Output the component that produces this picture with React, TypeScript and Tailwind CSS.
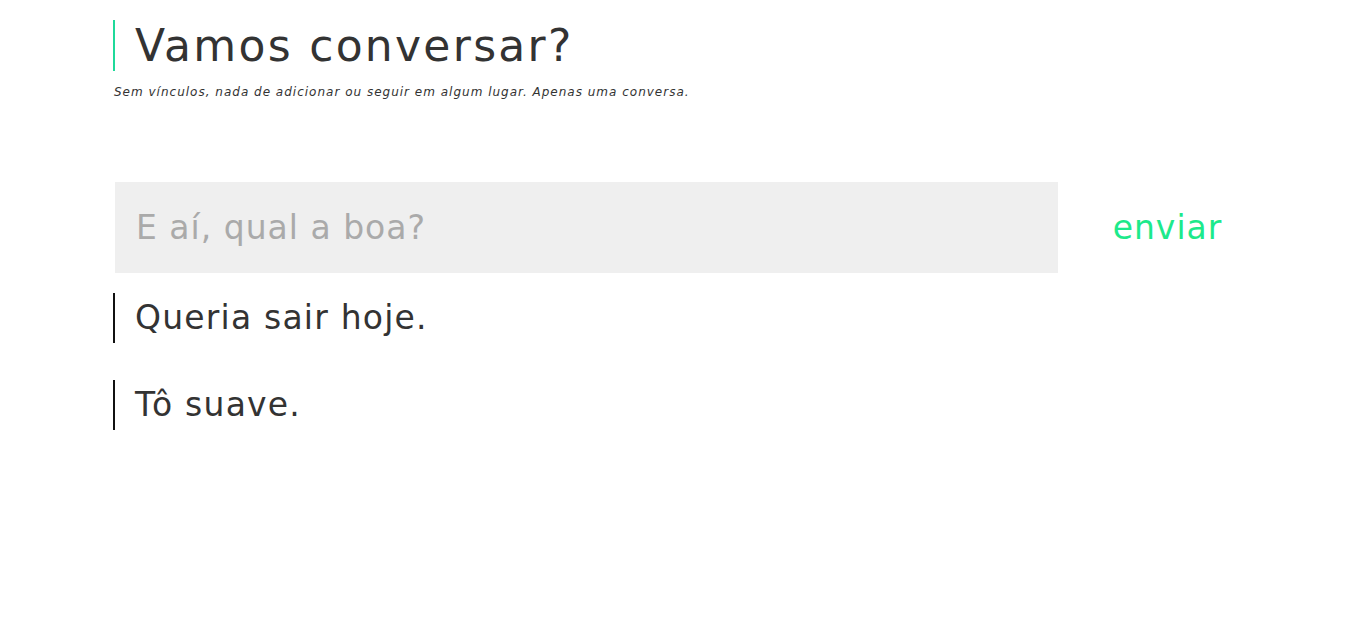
import React from "react";

const messages = ["Queria sair hoje.", "Tô suave."];

export default function App() {
  return (
    <div
      className="min-h-screen bg-white text-[#333]"
      style={{ fontFamily: '"DejaVu Sans", "Noto Sans", sans-serif' }}
    >
      <div className="w-[1140px] ml-[113px] pt-[20px]">
        {/* Header */}
        <h1 className="border-l-2 border-[#1fd99a] pl-[20px] text-[44px] leading-[51px] font-normal tracking-[2.3px]">
          Vamos conversar?
        </h1>
        <p className="mt-[14px] pl-[1px] text-[12px] leading-[14px] italic tracking-[1px]">
          Sem vínculos, nada de adicionar ou seguir em algum lugar. Apenas uma conversa.
        </p>

        {/* Form */}
        <div className="mt-[83px] flex items-stretch">
          <input
            className="ml-[2px] w-[943px] h-[91px] bg-[#efefef] px-[21px] text-[33px] tracking-[1px] outline-none placeholder:text-[#aaa]"
            placeholder="E aí, qual a boa?"
          />
          <button className="flex-1 text-[33px] tracking-[1px] text-[#1de98b] pl-[24px]">enviar</button>
        </div>

        {/* Messages */}
        <div className="mt-[20px] flex flex-col gap-[37px]">
          {messages.map((m, i) => (
            <div
              key={i}
              className="border-l-2 border-[#111] pl-[20px] h-[50px] flex items-center text-[33px] tracking-[1.2px]"
            >
              {m}
            </div>
          ))}
        </div>
      </div>
    </div>
  );
}
